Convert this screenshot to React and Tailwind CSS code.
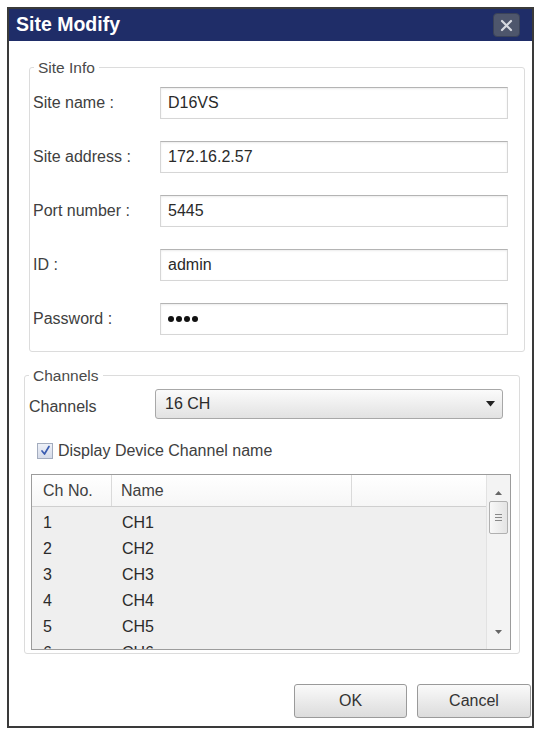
import React from "react";

const font = "font-['Liberation_Sans',Arial,sans-serif]";

function Field({ label, children }) {
  return (
    <div className="flex items-center h-[32px]">
      <div className="w-[127px] text-[16px] text-[#404040]">{label}</div>
      <div className="w-[348px] h-[32px] bg-white border border-[#d6d6d6] border-t-[#b4b4b4] shadow-[inset_0_1px_2px_rgba(0,0,0,0.08)] flex items-center pl-[7px] text-[16px] text-[#2a2a2a]">
        {children}
      </div>
    </div>
  );
}

const rows = ["CH1", "CH2", "CH3", "CH4", "CH5", "CH6"];

export default function App() {
  return (
    <div className={`w-[540px] h-[729px] bg-white ${font}`}>
      <div className="pl-[7px] pt-[7px]">
        <div className="w-[527px] h-[721px] border-2 border-[#3a3a3a] flex flex-col bg-white">
          {/* Title bar */}
          <div className="h-[32px] bg-[#1f2d68] flex items-center justify-between pl-[7px] pr-[12px]">
            <span className="text-[19.5px] font-bold text-white leading-none">Site Modify</span>
            <div className="w-[27px] h-[24px] rounded-[4px] bg-[#4e566c] border border-[#3a4258] flex items-center justify-center">
              <svg width="13" height="13" viewBox="0 0 13 13">
                <path d="M2 2 L11 11 M11 2 L2 11" stroke="#d6d9e0" strokeWidth="2.2" strokeLinecap="round" />
              </svg>
            </div>
          </div>

          {/* Body */}
          <div className="flex-1 flex flex-col">
            {/* Site Info */}
            <fieldset className="ml-[20px] mt-[18px] w-[496px] border border-[#dcdcdc] rounded-[3px] pl-[3px] pr-[16px] pt-[11px] pb-[16px] flex flex-col gap-[22px]">
              <legend className="ml-[1px] px-[4px] text-[15.5px] leading-[17px] text-[#4a4a4a]">Site Info</legend>
              <Field label="Site name :">D16VS</Field>
              <Field label="Site address :">172.16.2.57</Field>
              <Field label="Port number :">5445</Field>
              <Field label="ID :">admin</Field>
              <Field label="Password :">
                <span className="flex gap-[2px]">
                  <span className="w-[6px] h-[6px] rounded-full bg-[#111]" />
                  <span className="w-[6px] h-[6px] rounded-full bg-[#111]" />
                  <span className="w-[6px] h-[6px] rounded-full bg-[#111]" />
                  <span className="w-[6px] h-[6px] rounded-full bg-[#111]" />
                </span>
              </Field>
            </fieldset>

            {/* Channels */}
            <fieldset className="ml-[15px] mt-[15px] w-[496px] border border-[#dcdcdc] rounded-[3px] pl-[4px] pr-[8px] pt-[5px] pb-[3px] flex flex-col">
              <legend className="ml-[0px] px-[4px] text-[15.5px] leading-[17px] text-[#4a4a4a]">Channels</legend>
              <div className="flex items-center h-[30px]">
                <div className="w-[126px] pt-[5px] text-[16px] text-[#404040]">Channels</div>
                <div className="w-[348px] h-[30px] rounded-[3px] border border-[#a8a8a8] bg-gradient-to-b from-[#fbfbfb] to-[#e2e2e2] flex items-center justify-between pl-[9px] pr-[7px] text-[16px] text-[#2a2a2a]">
                  <span>16 CH</span>
                  <svg width="9" height="6" viewBox="0 0 9 6">
                    <path d="M0 0 L9 0 L4.5 5.5 Z" fill="#222" />
                  </svg>
                </div>
              </div>

              <div className="flex items-center mt-[23px] ml-[8px] h-[17px]">
                <div className="w-[16px] h-[16px] border border-[#a3acbe] bg-gradient-to-b from-[#eef1f8] to-[#d5dbe9] flex items-center justify-center">
                  <svg width="11" height="11" viewBox="0 0 11 11">
                    <path d="M2 6 L4.5 9 L9 1.5" stroke="#3a5cb0" strokeWidth="1.7" fill="none" strokeLinecap="round" strokeLinejoin="round" />
                  </svg>
                </div>
                <span className="ml-[5px] text-[16px] text-[#404040]">Display Device Channel name</span>
              </div>

              {/* Table */}
              <div className="mt-[15px] ml-[2px] w-[480px] h-[176px] border border-[#9c9c9c] flex bg-[#efefef] overflow-hidden">
                <div className="flex-1 flex flex-col overflow-hidden">
                  <div className="h-[32px] shrink-0 bg-gradient-to-b from-white to-[#f6f6f6] border-b border-[#cfcfcf] flex text-[16px] text-[#404040]">
                    <div className="w-[80px] pl-[11px] flex items-center border-r border-[#dadada]">Ch No.</div>
                    <div className="w-[240px] pl-[9px] flex items-center border-r border-[#dadada]">Name</div>
                    <div className="flex-1" />
                  </div>
                  <div className="pt-[3px] flex flex-col">
                    {rows.map((r, i) => (
                      <div key={r} className="h-[26px] shrink-0 flex items-center text-[16px] text-[#2a2a2a]">
                        <div className="w-[80px] pl-[11px]">{i + 1}</div>
                        <div className="pl-[10px]">{r}</div>
                      </div>
                    ))}
                  </div>
                </div>
                {/* Scrollbar */}
                <div className="w-[24px] shrink-0 bg-[#f3f3f3] border-l border-[#e2e2e2] flex flex-col items-center">
                  <div className="h-[24px] flex items-end pb-[4px]">
                    <svg width="7" height="4" viewBox="0 0 7 4">
                      <path d="M0 4 L7 4 L3.5 0 Z" fill="#666" />
                    </svg>
                  </div>
                  <div className="mt-[2px] w-[19px] h-[33px] rounded-[2px] border border-[#b0b0b0] bg-gradient-to-r from-[#f8f8f8] to-[#e4e4e4] flex flex-col items-center justify-center gap-[2px]">
                    <div className="w-[7px] h-[1px] bg-[#888]" />
                    <div className="w-[7px] h-[1px] bg-[#888]" />
                    <div className="w-[7px] h-[1px] bg-[#888]" />
                  </div>
                  <div className="flex-1" />
                  <div className="h-[24px] flex items-start pt-[5px]">
                    <svg width="7" height="4" viewBox="0 0 7 4">
                      <path d="M0 0 L7 0 L3.5 4 Z" fill="#666" />
                    </svg>
                  </div>
                </div>
              </div>
            </fieldset>

            {/* Buttons */}
            <div className="mt-[30px] flex justify-end gap-[10px] pr-[1px]">
              <button className="w-[113px] h-[34px] rounded-[3px] border border-[#9a9a9a] bg-gradient-to-b from-[#fafafa] to-[#dcdcdc] text-[16px] text-[#333]">OK</button>
              <button className="w-[114px] h-[34px] rounded-[3px] border border-[#9a9a9a] bg-gradient-to-b from-[#fafafa] to-[#dcdcdc] text-[16px] text-[#333]">Cancel</button>
            </div>
          </div>
        </div>
      </div>
    </div>
  );
}
